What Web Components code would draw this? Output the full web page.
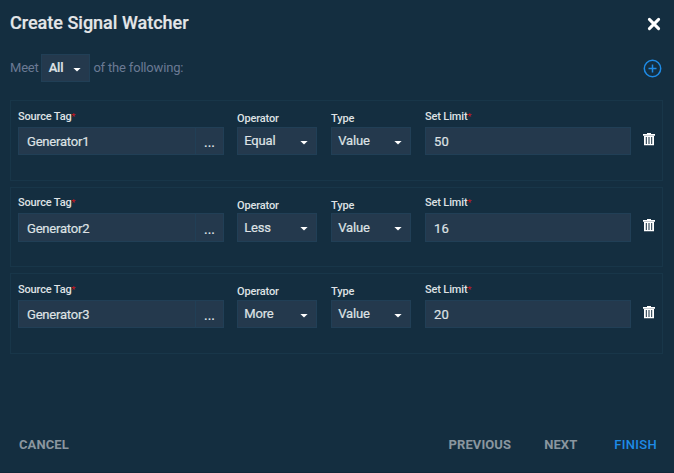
<!DOCTYPE html>
<html lang="en">
<head>
<meta charset="utf-8">
<title>Create Signal Watcher</title>
<style>
html,body{margin:0;height:100%;overflow:hidden;background:#142e40}
body{font-family:Roboto,"Liberation Sans",sans-serif;color:#e4e6e8}
</style>
</head>
<body>
<signal-dialog></signal-dialog>
<script>
const define = (name, html, setup) => customElements.define(name, class extends HTMLElement {
  constructor() {
    super();
    const t = document.createElement('template');
    t.innerHTML = html;
    this.attachShadow({mode: 'open'}).append(t.content.cloneNode(true));
  }
  connectedCallback() { if (setup) setup(this, this.shadowRoot); }
});

define('field-label', `<style>
:host{display:block;font-size:11px;line-height:14px;font-weight:500;letter-spacing:-.15px;white-space:nowrap;color:#dfe2e5}
i{display:none;font-style:normal;font-weight:400;color:#d0121b;font-size:9px;letter-spacing:0;line-height:1;vertical-align:0}
:host([required]) i{display:inline}
</style><slot></slot><i>*</i>`);

define('text-box', `<style>
:host{display:flex;box-sizing:border-box;height:28.3px;border:1px solid #213f56;background:#24394d;font-size:13px;line-height:27px;color:#dfe2e5}
.v{flex:1;padding:.5px 0 0 8px;letter-spacing:.2px;-webkit-text-stroke:.2px}
.more{display:none;width:28px;border-left:1px solid #213f56;text-align:center;font-weight:500;padding-top:1.5px;box-sizing:border-box}
:host([browse]) .more{display:block}
:host([browse]) .v{letter-spacing:-.2px}
</style><span class="v"><slot></slot></span><span class="more">...</span>`);

define('drop-down', `<style>
:host{display:flex;box-sizing:border-box;height:28.3px;border:1px solid #213f56;background:#24394d;font-size:13px;line-height:26px;color:#dfe2e5;padding:0 8.5px 0 6.3px;justify-content:space-between;align-items:center}
span{letter-spacing:-.2px;-webkit-text-stroke:.2px}
svg{display:block;width:8px;height:4px;margin-top:3.5px}
</style><span><slot></slot></span><svg viewBox="0 0 8 4"><path d="M.4 0h7.2L4 3.6z" fill="#fff"/></svg>`);

define('trash-icon', `<style>:host{display:block;width:12px;height:13px}svg{display:block}</style>
<svg width="12" height="13" viewBox="0 0 12 13"><path fill="#fff" fill-rule="evenodd" d="M4 0h4v1h4v1.8H0V1h4zM1 3h10v9.2H1zM2.8 4v7h1V4zM5 4v7h.5V4zM6.5 4v7h.5V4zM8.2 4v7h1V4z"/></svg>`);

define('condition-row', `<style>
:host{display:grid;box-sizing:border-box;height:80.5px;border:1px solid #183649;padding:8.3px 7px 0;grid-template-columns:206px 93px 94px 220px 24px;justify-content:start;align-items:start}
.f{display:flex;flex-direction:column;height:45.6px;justify-content:space-between}
.low{margin-left:13px;width:80px}
.low field-label{margin-top:2.8px}
.type,.limit{margin-left:14px}
trash-icon{margin:23.4px 0 0 12px}
</style>
<div class="f"><field-label required>Source Tag</field-label><text-box browse id="tag"></text-box></div>
<div class="f low"><field-label>Operator</field-label><drop-down id="op"></drop-down></div>
<div class="f low type"><field-label>Type</field-label><drop-down>Value</drop-down></div>
<div class="f limit"><field-label required>Set Limit</field-label><text-box id="limit"></text-box></div>
<trash-icon></trash-icon>`, (el, root) => {
  for (const k of ['tag', 'op', 'limit']) root.getElementById(k).textContent = el.getAttribute(k);
});

define('text-button', `<style>
:host{display:block;font-size:13px;line-height:16px;font-weight:700;color:#8a969f;white-space:nowrap;letter-spacing:.1px}
:host([primary]){color:#1e8be6;font-weight:500;letter-spacing:.3px}
</style><slot></slot>`);

define('signal-dialog', `<style>
:host{display:flex;flex-direction:column;box-sizing:border-box;height:473px;padding:0 11px 0 10px;background:#142e40;border-bottom:1px solid #112839}
header{display:flex;justify-content:space-between;align-items:center;height:46px}
h1{margin:0;font-size:18px;line-height:24px;font-weight:500;-webkit-text-stroke:.2px}
header svg{margin:2px 2px 0 0}
.meet{display:flex;align-items:center;height:28px;margin-top:8px;font-size:13px;color:#6b7a94}
.m{letter-spacing:-.2px;margin-top:-1px}
.o{letter-spacing:-.18px;margin-top:-1px}
.meet drop-down{width:49px;height:28px;margin:0 3px 0 2.8px;font-weight:500}
.meet svg{margin:1px 1px 0 auto}
.rows{display:flex;flex-direction:column;gap:6px;margin-top:18.3px}
footer{display:flex;margin:auto 0 19px;padding:0 6px 0 9px}
.prev{margin-left:auto}.next{margin-left:33px}.fin{margin-left:37px}
</style>
<header><h1>Create Signal Watcher</h1>
<svg width="14" height="14" viewBox="0 0 14 14"><path d="M2.4 2.4l9.2 9.2M11.6 2.4l-9.2 9.2" stroke="#fff" stroke-width="3" stroke-linecap="round"/></svg></header>
<div class="meet"><span class="m">Meet</span><drop-down>All</drop-down><span class="o">of the following:</span>
<svg width="19" height="19" viewBox="0 0 19 19" fill="none" stroke="#1e8be6" stroke-width="1.5"><circle cx="9.5" cy="9.5" r="8.2"/><path d="M5.5 9.5h8M9.5 5.5v8"/></svg></div>
<div class="rows">
<condition-row tag="Generator1" op="Equal" limit="50"></condition-row>
<condition-row tag="Generator2" op="Less" limit="16"></condition-row>
<condition-row tag="Generator3" op="More" limit="20"></condition-row>
</div>
<footer><text-button>CANCEL</text-button><text-button class="prev">PREVIOUS</text-button><text-button class="next">NEXT</text-button><text-button class="fin" primary>FINISH</text-button></footer>`);
</script>
</body>
</html>
